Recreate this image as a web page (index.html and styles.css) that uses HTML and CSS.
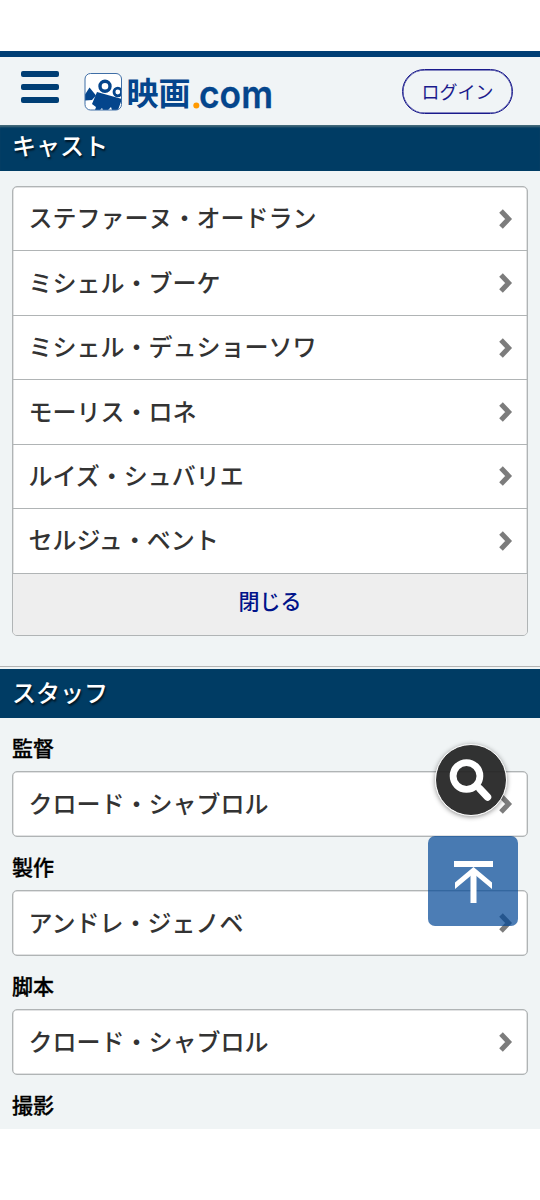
FILE: index.html
```html
<!DOCTYPE html>
<html lang="ja">
<head>
	<meta charset="utf-8">
	<meta name="viewport" content="width=device-width">
	<title>映画.com</title>
	<link rel="stylesheet" href="styles.css">
</head>
<body>
	<svg width="0" height="0" class="defs">
		<symbol id="arrow" viewBox="0 0 14 20"><path d="M2 2l7.600 8L2 18" fill="none" stroke="#7c7c7c" stroke-width="5"/></symbol>
	</svg>
	<header class="header">
		<div class="menu"><span></span><span></span><span></span></div>
		<svg class="logo" width="200" height="66" viewBox="0 -12 200 66">
			<clipPath id="frame"><rect x="1" y="4" width="37" height="37" rx="5"/></clipPath>
			<rect x="1" y="4" width="36.500" height="37" rx="5.500" fill="#fff"/>
			<g clip-path="url(#frame)" fill="#04458c">
				<path d="M5.500 18.500l6.500 8-4 4.500-7 .5v-6z"/>
				<path d="M13 23l25 7-4 11h-6l-1-3-3 3h-5l-1-2-2 2h-5l1-3-4-3z"/>
				<circle cx="21" cy="17.300" r="5" fill="#fff" stroke="#04458c" stroke-width="3.400"/>
				<circle cx="33.800" cy="23" r="3.800" fill="#fff" stroke="#04458c" stroke-width="2.800"/>
			</g>
			<rect x="1" y="4.500" width="36.500" height="36.500" rx="5.500" fill="none" stroke="#3f6ea6"/>
			<text class="logo-kanji" x="42.500" y="36" textLength="64">映画</text>
			<circle cx="112.300" cy="36.500" r="3" fill="#f90"/>
			<text class="logo-com" x="115" y="39" textLength="74" lengthAdjust="spacingAndGlyphs">com</text>
		</svg>
		<a class="login">ログイン</a>
	</header>
	<main class="page">
		<h2 class="title title-cast">キャスト</h2>
		<div class="list cast">
			<a class="row">ステファーヌ・オードラン<svg><use href="#arrow"/></svg></a>
			<a class="row">ミシェル・ブーケ<svg><use href="#arrow"/></svg></a>
			<a class="row">ミシェル・デュショーソワ<svg><use href="#arrow"/></svg></a>
			<a class="row">モーリス・ロネ<svg><use href="#arrow"/></svg></a>
			<a class="row">ルイズ・シュバリエ<svg><use href="#arrow"/></svg></a>
			<a class="row">セルジュ・ベント<svg><use href="#arrow"/></svg></a>
			<a class="close">閉じる</a>
		</div>
		<section class="staff">
			<h2 class="title">スタッフ</h2>
			<h3 class="job">監督</h3>
			<div class="list">
				<a class="row">クロード・シャブロル<svg><use href="#arrow"/></svg></a>
			</div>
			<h3 class="job">製作</h3>
			<div class="list">
				<a class="row">アンドレ・ジェノベ<svg><use href="#arrow"/></svg></a>
			</div>
			<h3 class="job">脚本</h3>
			<div class="list">
				<a class="row">クロード・シャブロル<svg><use href="#arrow"/></svg></a>
			</div>
			<h3 class="job">撮影</h3>
		</section>
	</main>
	<a class="search">
		<svg width="70" height="70" viewBox="0 0 70 70" fill="none" stroke="#fff">
			<circle cx="30.500" cy="31" r="13.400" stroke-width="6.800"/>
			<path d="M40 40l4 4" stroke-width="5.500"/>
			<path d="M44 44l7.500 8" stroke-width="7.500" stroke-linecap="round"/>
		</svg>
	</a>
	<a class="totop">
		<svg width="90" height="90" viewBox="0 0 90 90" fill="#fff">
			<path d="M26 25h39v6H26zM42.500 35h6v32h-6z"/>
			<path d="M45.500 31L64 46.500v6.500L45.500 37.500 27 53v-6.500z"/>
		</svg>
	</a>
</body>
</html>
```
FILE: styles.css
```css
html, body {
	margin: 0;
	padding: 0;
	background: #fff;
}
body {
	height: 1200px;
	padding-top: 51px;
	box-sizing: border-box;
	overflow: hidden;
	font-family: "Noto Sans CJK JP", sans-serif;
	font-weight: 500;
	color: #333;
}
.defs {
	display: none;
}
.header {
	display: flex;
	align-items: flex-start;
	box-sizing: border-box;
	height: 74px;
	padding: 0 27px 0 21px;
	border-top: 6px solid #003e75;
	background: #f0f4f6;
}
.menu {
	display: flex;
	flex-direction: column;
	gap: 7.500px;
	width: 38px;
	padding-top: 14px;
}
.menu span {
	height: 5.500px;
	border-radius: 2px;
	background: #003e75;
}
.logo {
	margin-left: 25px;
}
.logo-kanji {
	font: 700 32px "Noto Sans CJK JP", sans-serif;
	fill: #04458c;
}
.logo-com {
	font: 600 38px Inter, sans-serif;
	fill: #04458c;
	stroke: #04458c;
	stroke-width: .3px;
	stroke-linejoin: round;
}
.login {
	box-sizing: border-box;
	width: 111px;
	height: 45px;
	margin: 12px 0 0 auto;
	border: 1px solid #1a1a8c;
	box-shadow: inset 0 0 0 .5px #1a1a8c;
	border-radius: 23px;
	color: #1a1a8c;
	font-size: 18px;
	font-weight: 400;
	line-height: 42px;
	text-align: center;
}
.page {
	height: 1004px;
	overflow: hidden;
	background: #f0f4f5;
}
.title {
	box-sizing: border-box;
	height: 49px;
	margin: 0;
	padding-left: 12px;
	background: #003c64;
	color: #fff;
	font-size: 24px;
	font-weight: 500;
	line-height: 46px;
	text-shadow: 1px 2px 2px rgba(0, 0, 0, .7);
}
.title-cast {
	height: 46px;
	line-height: 40px;
	box-shadow: inset 0 3px 2px -1px #456b7b;
}
.list {
	box-sizing: border-box;
	margin: 0 12px;
	border: 1px solid #b0b4b5;
	box-shadow: inset 0 0 0 .5px #c4c6c7;
	border-radius: 5px;
	background: #fff;
	overflow: hidden;
}
.row {
	display: flex;
	align-items: center;
	justify-content: space-between;
	box-sizing: border-box;
	height: 64px;
	padding: 0 14px 4px 15.500px;
	font-size: 24px;
}
.row svg {
	width: 14px;
	height: 20px;
	margin-top: 4px;
}
.cast {
	height: 450px;
	margin-top: 15px;
}
.cast .row {
	height: 64.450px;
	border-bottom: 1px solid #b0b4b5;
}
.close {
	display: block;
	height: 62px;
	background: #eee;
	color: #00138a;
	font-size: 21px;
	line-height: 53px;
	text-align: center;
}
.staff {
	margin-top: 30px;
	border-top: 1px solid #b4b4b4;
	padding-top: 2px;
}
.job {
	height: 53px;
	margin: 0 12px;
	color: #000;
	font-size: 21px;
	font-weight: 500;
	line-height: 58px;
	-webkit-text-stroke: .3px #000;
}
.search, .totop {
	position: absolute;
	box-sizing: border-box;
}
.search {
	left: 435px;
	top: 744px;
	width: 72px;
	height: 72px;
	border: 1px solid #fff;
	border-radius: 50%;
	background: rgba(34, 34, 34, .93);
	box-shadow: 0 1px 5px rgba(0, 0, 0, .45);
}
.totop {
	left: 427.500px;
	top: 835.500px;
	width: 90px;
	height: 90px;
	border-radius: 7px;
	background: rgba(0, 70, 150, .7);
}
```
